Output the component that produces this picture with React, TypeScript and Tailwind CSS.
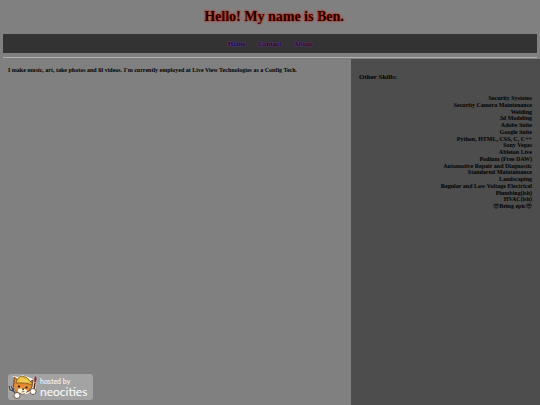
import React from "react";

const links = ["Home", "Contact", "About"];

const skills = [
  "Security Systems",
  "Security Camera Maintenance",
  "Welding",
  "3d Modeling",
  "Adobe Suite",
  "Google Suite",
  "Python, HTML, CSS, C, C++",
  "Sony Vegas",
  "Ableton Live",
  "Podium (Free DAW)",
  "Automotive Repair and Diagnostic",
  "Standarnd Maintainance",
  "Landscaping",
  "Regular and Low Voltage Electrical",
  "Plumbing(ish)",
  "HVAC(ish)",
  "😎Being epic😎",
];

export default function App() {
  return (
    <div className="flex min-h-screen flex-col bg-[#808080] font-['Liberation_Serif','DejaVu_Sans',serif] font-bold text-black">
      <header className="px-[3px] pt-2">
        <h1 className="pl-2 text-center text-[14px] leading-[18px] text-[#200000] [text-shadow:0_0_2px_#e02000,0_0_2px_#c02000]">
          Hello! My name is Ben.
        </h1>
        <nav className="mt-2 flex h-[19px] items-center justify-center gap-3 bg-[#333333]">
          {links.map((name) => (
            <a
              key={name}
              href={`#${name.toLowerCase()}`}
              className="text-[7px] leading-[8px] text-[#0c0414] [text-shadow:0_0_1px_#9050c8,0_0_2px_#7a30b8]"
            >
              {name}
            </a>
          ))}
        </nav>
        <hr className="mt-1 mb-px border-t border-[#b0b0b0]" />
      </header>

      <div className="flex grow">
        <main className="flex w-[65%] flex-col justify-between px-2 pt-2 pb-[5px]">
          <p className="text-[6px] leading-[7px]">
            I make music, art, take photos and lil videos. I'm currently employed at Live View Technologies as a Config Tech.
          </p>
          <a href="#neocities" aria-label="Hosted by Neocities" className="flex h-[26px] w-[85px] items-center rounded-[3px] bg-[#a3a3a3]">
            <Mascot />
            <Wordmark />
          </a>
        </main>

        <aside className="w-[35%] bg-[#4d4d4d] px-2 pt-[14px]">
          <h2 className="text-[7px] leading-[8px]">Other Skills:</h2>
          <ul className="mt-[14px] grid h-[115px] auto-rows-fr text-right text-[6px] leading-[7px]">
            {skills.map((skill) => (
              <li key={skill}>{skill}</li>
            ))}
          </ul>
        </aside>
      </div>
    </div>
  );
}

const Wordmark = () => (
  <span className="flex flex-col font-['Lato',sans-serif] font-normal text-white">
    <span className="text-[7px] leading-[9px]">hosted by</span>
    <span className="text-[12px] leading-[12px]">neocities</span>
  </span>
);

const Mascot = () => (
  <svg viewBox="0 0 32 26" className="h-[26px] w-8 shrink-0" aria-hidden="true">
    {/* white sticker outline */}
    <path d="M6 7 5 2l5 1 4-2 6 2 5 2 1 7-2 5-5 3H9l-4-5Z" fill="#fff" />
    {/* ears and head */}
    <path d="m6 8 0-5 4 3 11 2 4-2-1 7-3 4-6 3-6-1-4-5Z" fill="#e58a35" stroke="#4a2a12" strokeWidth=".8" />
    <path d="m10 15 4-1 5 2-1 3-4 1-4-2Z" fill="#fff4df" />
    <circle cx="11" cy="12.500" r="1.100" fill="#241405" />
    <circle cx="18.500" cy="13.500" r="1.100" fill="#241405" />
    <path d="M13.500 14.500h3l-1.500 2ZM13 18q2 1 4-1" fill="#241405" />
    {/* hard hat */}
    <path d="M8 9q1-6 6-7 5 0 9 6l2 3q-8-3-17-2Z" fill="#e8b93a" stroke="#7c5a18" strokeWidth=".8" />
    <path d="m12 5 8 2m-9 0 8 1" stroke="#f8df80" strokeWidth=".8" />
    {/* fork */}
    <path d="m4 15 5 7M1 12l1 4 3 1 1-3M3 12l2 4" fill="none" stroke="#c9c9c9" strokeWidth="2.500" />
    <path d="m4 15 5 7M1 12l1 4 3 1 1-3M3 12l2 4" fill="none" stroke="#3c444c" strokeWidth="1.300" />
    {/* brush */}
    <path d="m27 9-2 12" stroke="#e8e8e8" strokeWidth="3" />
    <path d="m27 9-2 12" stroke="#4b2420" strokeWidth="1.500" />
    <path d="m26 4 2-3 1 4-1 4-2-1Z" fill="#7a2d35" stroke="#d8cccc" strokeWidth=".5" />
    {/* paws */}
    <circle cx="9" cy="21.500" r="3" fill="#fff" stroke="#4a2a12" strokeWidth=".7" />
    <circle cx="25" cy="17.500" r="3" fill="#fff" stroke="#4a2a12" strokeWidth=".7" />
  </svg>
);
